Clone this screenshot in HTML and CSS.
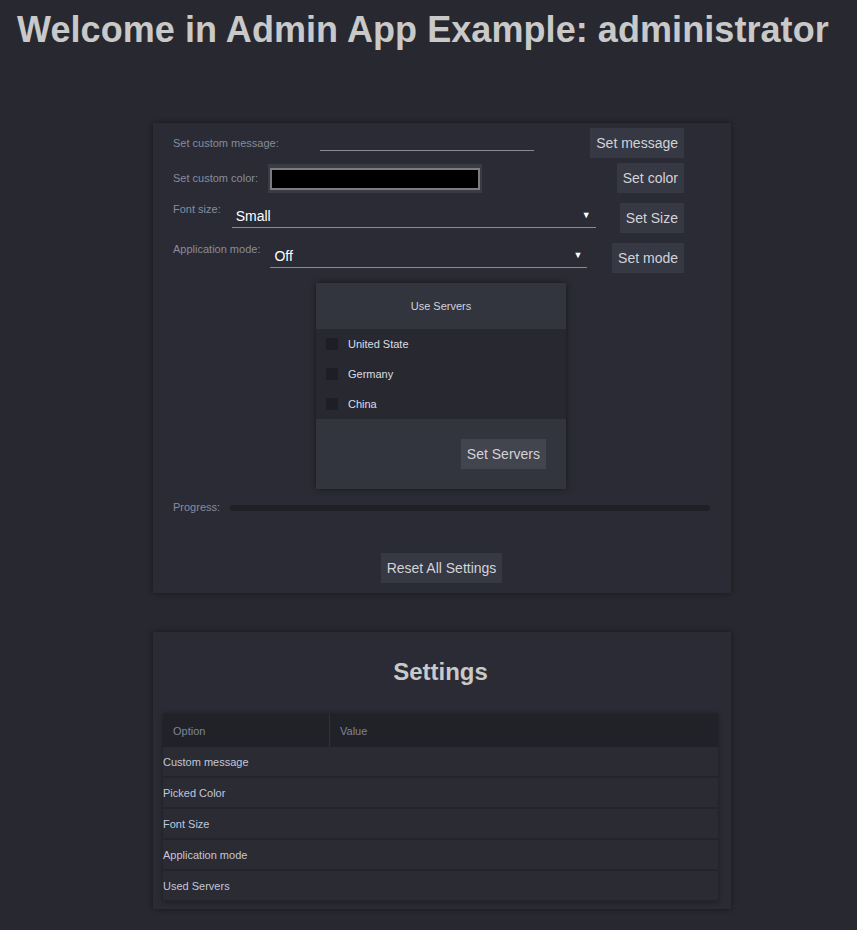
FILE: index.html
```html
<!DOCTYPE html>
<html>
<head>
<meta charset="utf-8">
<title>Admin App Example</title>
<link rel="stylesheet" href="styles.css">
</head>
<body>
<h1 class="title">Welcome in Admin App Example: administrator</h1>
<main class="main">
  <section class="card card-form">
    <div class="row row-msg">
      <label class="lbl">Set custom message:</label>
      <input class="txt" type="text">
      <button class="btn">Set message</button>
    </div>
    <div class="row row-color">
      <label class="lbl">Set custom color:</label>
      <div class="color-box"><div class="color-swatch"></div></div>
      <button class="btn">Set color</button>
    </div>
    <div class="row row-top row-size">
      <label class="lbl">Font size:</label>
      <div class="sel sel-size"><span>Small</span><span class="arrow">▼</span></div>
      <button class="btn">Set Size</button>
    </div>
    <div class="row row-top row-mode">
      <label class="lbl">Application mode:</label>
      <div class="sel sel-mode"><span>Off</span><span class="arrow">▼</span></div>
      <button class="btn">Set mode</button>
    </div>
    <div class="servers">
      <div class="servers-head">Use Servers</div>
      <ul class="servers-list">
        <li class="srv"><span class="chk"></span>United State</li>
        <li class="srv"><span class="chk"></span>Germany</li>
        <li class="srv"><span class="chk"></span>China</li>
      </ul>
      <div class="servers-foot"><button class="btn btn-light">Set Servers</button></div>
    </div>
    <div class="progress-row">
      <span class="lbl">Progress:</span>
      <div class="bar"></div>
    </div>
    <div class="reset-row"><button class="btn">Reset All Settings</button></div>
  </section>

  <section class="card card-settings">
    <h2 class="sub">Settings</h2>
    <table class="tbl">
      <thead>
        <tr><th class="c1">Option</th><th>Value</th></tr>
      </thead>
      <tbody>
        <tr><td>Custom message</td><td></td></tr>
        <tr><td>Picked Color</td><td></td></tr>
        <tr><td>Font Size</td><td></td></tr>
        <tr><td>Application mode</td><td></td></tr>
        <tr><td>Used Servers</td><td></td></tr>
      </tbody>
    </table>
  </section>
</main>
</body>
</html>
```

FILE: styles.css
```css
html, body {
  background: #282930;
}
body {
  margin: 0;
  font-family: "Liberation Sans", Arial, sans-serif;
  color: #c8c8c8;
}
.title {
  margin: 0;
  padding: 9px 0 0 17px;
  font-size: 36px;
  font-weight: bold;
  line-height: 41px;
  letter-spacing: 0.07px;
  color: #c9c9c9;
}
.main {
  padding: 73px 0 20px 153px;
}
.card {
  width: 578px;
  box-sizing: border-box;
  background: #2a2b34;
  box-shadow: 0 0 6px rgba(0, 0, 0, 0.45);
}
.card-form {
  padding: 5px 21px 10px 20px;
}
.row {
  display: flex;
  align-items: center;
  width: 511px;
}
.row-top {
  align-items: flex-start;
}
.row-color { margin-top: 5px; }
.row-size { margin-top: 10px; }
.row-mode { margin-top: 10px; }
.lbl {
  font-size: 11px;
  line-height: 13px;
  color: #878c9d;
}
.btn {
  margin-left: auto;
  height: 30px;
  padding: 0 6px;
  border: none;
  background: #363843;
  color: #d2d3d8;
  font-family: "Liberation Sans", Arial, sans-serif;
  font-size: 14px;
}
.btn-light {
  background: #42444e;
}
.txt {
  width: 214px;
  height: 14px;
  margin-left: 41px;
  padding: 0;
  border: none;
  border-bottom: 1px solid #8a8b92;
  background: transparent;
  outline: none;
}
.color-box {
  margin-left: 10px;
  width: 214px;
  height: 29px;
  box-sizing: border-box;
  padding: 4px 2px 3px 2px;
  background: #393b45;
}
.color-swatch {
  height: 100%;
  box-sizing: border-box;
  border: 2px solid #7b7b80;
  background: #000;
}
.sel {
  display: flex;
  justify-content: space-between;
  box-sizing: border-box;
  height: 25px;
  padding: 5px 5px 0 4px;
  border-bottom: 1px solid #8a8b92;
  font-size: 14px;
  line-height: 16px;
  color: #ffffff;
}
.sel-size {
  width: 364px;
  margin-left: 11px;
}
.sel-mode {
  width: 317px;
  margin-left: 10px;
}
.arrow {
  font-size: 9px;
  line-height: 14px;
}
.servers {
  width: 250px;
  margin: 10px 0 0 143px;
  box-shadow: 0 0 6px rgba(0, 0, 0, 0.45);
}
.servers-head {
  height: 46px;
  background: #33353e;
  display: flex;
  align-items: center;
  justify-content: center;
  font-size: 11px;
  color: #d2d3da;
}
.servers-list {
  margin: 0;
  padding: 0;
  list-style: none;
  background: #282930;
}
.srv {
  height: 30px;
  display: flex;
  align-items: center;
  padding-left: 10px;
  font-size: 11px;
  color: #dcdde6;
}
.chk {
  width: 12px;
  height: 12px;
  margin-right: 10px;
  background: #1e1f24;
}
.servers-foot {
  height: 70px;
  box-sizing: border-box;
  padding: 20px 20px 0 0;
  display: flex;
  background: #33353e;
}
.progress-row {
  display: flex;
  align-items: center;
  margin-top: 12px;
}
.bar {
  flex: 1;
  height: 6px;
  margin-left: 10px;
  border-radius: 3px;
  background: #1f2025;
}
.reset-row {
  display: flex;
  justify-content: center;
  margin-top: 39px;
}
.reset-row .btn {
  margin-left: 0;
}
.card-settings {
  margin-top: 39px;
  padding: 26px 13px 7px 10px;
}
.sub {
  margin: 0;
  text-align: center;
  font-size: 24px;
  line-height: 28px;
  font-weight: bold;
  color: #c9c9c9;
}
.tbl {
  margin-top: 28px;
  width: 555px;
  border-collapse: collapse;
  box-shadow: 0 0 5px rgba(0, 0, 0, 0.4);
  font-size: 11px;
}
.tbl th {
  height: 33px;
  padding: 0 0 0 10px;
  text-align: left;
  font-weight: normal;
  color: #7f8598;
  background: #212227;
}
.tbl th.c1 {
  width: 156px;
  border-right: 1px solid #30323a;
}
.tbl td {
  height: 29px;
  padding: 0;
  color: #c3c7dc;
  background: #2a2b33;
  border-bottom: 2px solid #24252b;
}
```
